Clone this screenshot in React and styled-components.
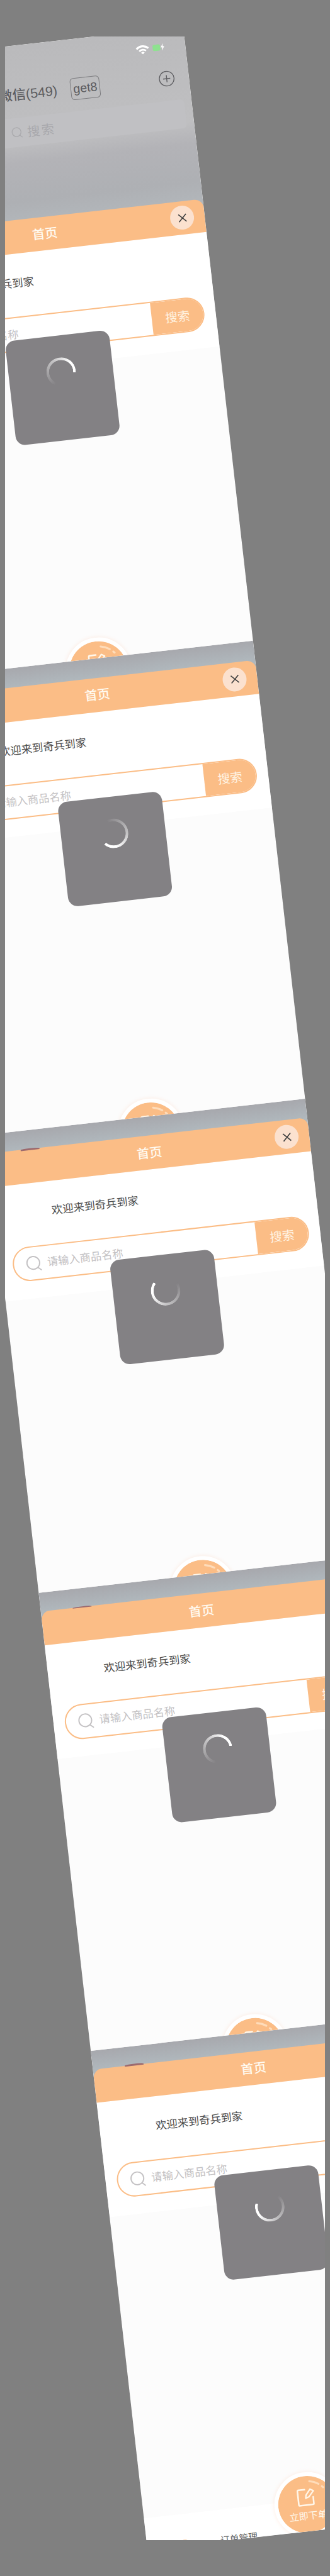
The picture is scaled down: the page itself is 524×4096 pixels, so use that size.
import React from "react";
import styled, { createGlobalStyle, css } from "styled-components";

const u = (n) => `${(n * 0.6326).toFixed(3)}px`;

const orange = "#fbbd86";

const GlobalStyle = createGlobalStyle`
  html, body { margin: 0; background: #808080; }
  body { overflow: hidden; }
  * { box-sizing: border-box; }
`;

const Stage = styled.div`
  width: 524px;
  height: 4096px;
  padding: ${u(92)} 0 0 ${u(12)};
  background: #808080;
  overflow: hidden;
  font-family: "Noto Sans", "Noto Sans CJK SC", sans-serif;
`;

const Frame = styled.div`
  width: ${u(804)};
  height: ${u(6292)};
  overflow: hidden;
`;

const Page = styled.main`
  display: flex;
  flex-direction: column;
  width: 100%;
  height: 100%;
  overflow: hidden;
  background: #fcfcfc;
  transform: rotate(-6.479deg);
`;

const Screen = styled.section`
  position: relative;
  flex: none;
  display: flex;
  flex-direction: column;
  height: ${(p) => u(p.$height)};
  overflow: hidden;
`;

const StatusArea = styled.div`
  flex: none;
  display: flex;
  flex-direction: column;
  height: ${(p) => u(p.$height + 24)};
  margin-bottom: -${u(24)};
  background: ${(p) =>
    p.$full
      ? "linear-gradient(#bababc 0%, #bfbfc1 52%, #b3b3b7 64%, #aeb0b4 85%, #b3b8bc 100%)"
      : "linear-gradient(#a7a8ad, #b0b8bd 70%)"};
`;

const SystemIcons = styled.div`
  display: flex;
  align-items: center;
  justify-content: flex-end;
  gap: ${u(10)};
  height: ${u(92)};
  padding-right: ${u(51)};
`;

const Battery = styled.div`
  display: flex;
  align-items: center;
  gap: ${u(1)};
`;

const Charge = styled.span`
  width: ${u(18)};
  height: ${u(17)};
  border-radius: ${u(4)};
  background: #8ee28f;
`;

const ChatBar = styled.div`
  display: grid;
  grid-template-columns: ${u(325)} ${u(181)} 1fr auto;
  align-items: center;
  height: ${u(68)};
  padding-right: ${u(35)};
  color: #5c5c60;
`;

const ChatTitle = styled.h1`
  grid-column: 2;
  margin: 0;
  font: 500 ${u(34)} / 1 "Liberation Sans", "Noto Sans CJK SC", sans-serif;
  white-space: nowrap;
`;

const ChatTag = styled.span`
  justify-self: start;
  width: ${u(74)};
  height: ${u(56)};
  border: 1px solid #7c7c7f;
  border-radius: ${u(9)};
  font: ${u(31)} / ${u(51)} "Liberation Sans", sans-serif;
  text-align: center;
`;

const ChatSearch = styled.div`
  display: flex;
  align-items: center;
  justify-content: center;
  gap: ${u(12)};
  height: ${u(72)};
  margin: ${u(22)} ${u(18)} 0;
  border-radius: ${u(10)};
  background: #c0c0c3;
  color: #a9a9ad;
  font-size: ${u(32)};
  letter-spacing: ${u(4)};
  line-height: 1;
`;

const Header = styled.header`
  position: relative;
  flex: none;
  display: grid;
  grid-template-columns: 1fr auto 1fr;
  align-items: center;
  height: ${u(85)};
  padding: 0 ${u(26)} 0 ${u(24)};
  border-radius: ${u(22)} ${u(22)} 0 0;
  background: ${orange};
`;

const HeaderTitle = styled.h2`
  grid-column: 2;
  margin: 0;
  color: #fffaf0;
  font: 500 ${u(32)} / 1 "Noto Sans CJK SC", sans-serif;
`;

const CloseButton = styled.button`
  justify-self: end;
  display: grid;
  place-items: center;
  width: ${u(60)};
  height: ${u(60)};
  padding: 0;
  border: 0;
  border-radius: 50%;
  background: #fbe1cf;
  color: #404040;
`;

const NoticeEdge = styled.i`
  position: absolute;
  top: -${u(2)};
  left: ${u(80)};
  width: ${u(48)};
  height: ${u(4)};
  border-radius: 50% 50% 0 0;
  background: #9c6a6e;
`;

const Intro = styled.div`
  flex: none;
  display: flex;
  flex-direction: column;
  height: ${u(289)};
  padding: ${u(60)} ${u(28)} 0;
  background: #ffffff;
`;

const Greeting = styled.p`
  margin: 0 0 ${u(69.5)} ${u(113)};
  color: #4c4c4c;
  font-size: ${u(27.4)};
  line-height: ${u(28)};
`;

const SearchBar = styled.div`
  display: flex;
  width: ${u(748)};
  height: ${u(87.5)};
  border: ${u(3.6)} solid ${orange};
  border-radius: ${u(44)};
  overflow: hidden;
`;

const SearchField = styled.div`
  flex: 1;
  display: flex;
  align-items: center;
  gap: ${u(14)};
  padding-left: ${u(30)};
  color: #c4c2c4;
  font-size: ${u(27.4)};
  line-height: 1;
`;

const SearchButton = styled.button`
  width: ${u(129)};
  padding: 0;
  border: 0;
  background: ${orange};
  color: #fff3e2;
  font: ${u(31)} / 1 "Noto Sans CJK SC", sans-serif;
`;

const Loader = styled.div`
  position: absolute;
  top: ${(p) => u(p.$top)};
  left: ${u(271)};
  display: flex;
  justify-content: center;
  width: ${u(262.5)};
  height: ${u(264.5)};
  padding-top: ${u(55)};
  border-radius: ${u(24)};
  background: #838184;
`;

const Spinner = styled.div`
  width: ${u(74)};
  height: ${u(74)};
  border-radius: 50%;
  background: conic-gradient(
    from ${(p) => p.$head + 90}deg,
    rgba(255, 255, 255, 0) 110deg,
    rgba(255, 255, 255, 0.55) 235deg,
    #ffffff 310deg
  );
  mask: radial-gradient(closest-side, transparent 80%, #000 83%);
`;

const OrderButton = styled.button`
  position: absolute;
  top: ${(p) => u(p.$top)};
  left: ${u(329)};
  display: flex;
  flex-direction: column;
  align-items: center;
  gap: ${u(9)};
  width: ${u(164)};
  height: ${u(164)};
  padding: ${u(31)} 0 0;
  border: ${u(10)} solid #ffffff;
  border-radius: 50%;
  background: ${orange};
  background-clip: padding-box;
  box-shadow: 0 0 ${u(9)} ${u(3)} rgba(255, 170, 120, 0.13);
  color: #fff7ea;
  font: ${u(24)} / ${u(26)} "Noto Sans CJK SC", sans-serif;
  white-space: nowrap;
`;

const Shine = styled.svg`
  position: absolute;
  inset: 0;
  width: 100%;
  height: 100%;
`;

const TabBar = styled.nav`
  display: flex;
  align-items: flex-start;
  height: ${u(80)};
  margin-top: auto;
  padding: ${u(65)} 0 0 ${u(88)};
  background: #ffffff;
`;

const HomeMark = styled.span`
  width: ${u(14)};
  height: ${u(8)};
  margin-right: ${u(83)};
  border-radius: 50% 50% 0 0;
  background: ${orange};
`;

const TabLabel = styled.span`
  color: #5c5c5c;
  font-size: ${u(23.4)};
  line-height: ${u(23)};
`;

const Icon = styled.svg`
  flex: none;
  display: block;
  width: ${(p) => u(p.$w)};
  height: ${(p) => u(p.$h || p.$w)};
  fill: none;
  stroke: currentColor;
  ${(p) =>
    p.$round &&
    css`
      stroke-linecap: round;
      stroke-linejoin: round;
    `}
`;

const WifiIcon = () => (
  <Icon $w={34} $h={24} viewBox="0 0 34 24" color="#fff">
    <path d="M2 9.5a21.5 21.5 0 0 1 30 0" strokeWidth="5" />
    <path d="M8.5 15.5a12.4 12.4 0 0 1 17 0" strokeWidth="4.6" />
    <path d="M17 24l-4.5-4.8a6.5 6.5 0 0 1 9 0z" fill="#fff" stroke="none" />
  </Icon>
);

const BoltIcon = () => (
  <Icon $w={11} $h={18} viewBox="0 0 11 18">
    <path d="M7.5 0L1 10h4L3.5 18 10.500 7.500h-4z" fill="#fff" stroke="none" />
  </Icon>
);

const PlusCircleIcon = () => (
  <Icon $w={40} viewBox="0 0 40 40" strokeWidth="2.2">
    <circle cx="20" cy="20" r="18.500" />
    <path d="M20 11v18M11 20h18" />
  </Icon>
);

const CloseIcon = () => (
  <Icon $w={24} viewBox="0 0 24 24" strokeWidth="2.6">
    <path d="M2.500 2.500l19 19M21.500 2.500l-19 19" />
  </Icon>
);

const SearchIcon = ({ size = 40 }) => (
  <Icon $w={size} viewBox="0 0 40 40" strokeWidth="3" $round>
    <circle cx="18.500" cy="18.500" r="16" />
    <path d="M29 31l8 7" />
  </Icon>
);

const EditIcon = () => (
  <Icon $w={46} viewBox="0 0 46 46" strokeWidth="4" $round>
    <path d="M21 4H6a3 3 0 0 0-3 3v34a2 2 0 0 0 2 2h34a2 2 0 0 0 2-2V24" />
    <path d="M22 26l1.500-8L35 4l8 5-12.500 14z" strokeWidth="3.600" />
  </Icon>
);

function MiniScreen({ height, status, head, notice, full, tabs }) {
  const fold = status + 85;
  return (
    <Screen $height={height}>
      <StatusArea $height={status} $full={full}>
        {full && (
          <>
            <SystemIcons>
              <WifiIcon />
              <Battery>
                <Charge />
                <BoltIcon />
              </Battery>
            </SystemIcons>
            <ChatBar>
              <ChatTitle>微信(549)</ChatTitle>
              <ChatTag>get8</ChatTag>
              <PlusCircleIcon />
            </ChatBar>
            <ChatSearch>
              <SearchIcon size={28} />
              搜索
            </ChatSearch>
          </>
        )}
      </StatusArea>
      <Header>
        {notice && <NoticeEdge />}
        <HeaderTitle>首页</HeaderTitle>
        <CloseButton aria-label="关闭">
          <CloseIcon />
        </CloseButton>
      </Header>
      <Intro>
        <Greeting>欢迎来到奇兵到家</Greeting>
        <SearchBar>
          <SearchField>
            <SearchIcon />
            请输入商品名称
          </SearchField>
          <SearchButton>搜索</SearchButton>
        </SearchBar>
      </Intro>
      {tabs && (
        <TabBar>
          <HomeMark />
          <TabLabel>订单管理</TabLabel>
        </TabBar>
      )}
      <Loader $top={fold + 216}>
        <Spinner $head={head} />
      </Loader>
      <OrderButton $top={fold + 980.5}>
        <EditIcon />
        立即下单
        <Shine viewBox="0 0 144 144" fill="none" stroke="#fedcba" strokeWidth="5" strokeLinecap="round">
          <path d="M84 14a59 59 0 0 1 22 9M114 30l3 3" />
        </Shine>
      </OrderButton>
    </Screen>
  );
}

const screens = [
  { height: 1554, status: 435.5, head: 9, full: true },
  { height: 1159, status: 48.5, head: 136 },
  { height: 1158.5, status: 47.5, head: 221, notice: true },
  { height: 1158.5, status: 47, head: -7, notice: true },
  { height: 1262, status: 47, head: 200, notice: true, tabs: true },
];

export default function App() {
  return (
    <>
      <GlobalStyle />
      <Stage>
        <Frame>
          <Page>
            {screens.map((screen, i) => (
              <MiniScreen key={i} {...screen} />
            ))}
          </Page>
        </Frame>
      </Stage>
    </>
  );
}
